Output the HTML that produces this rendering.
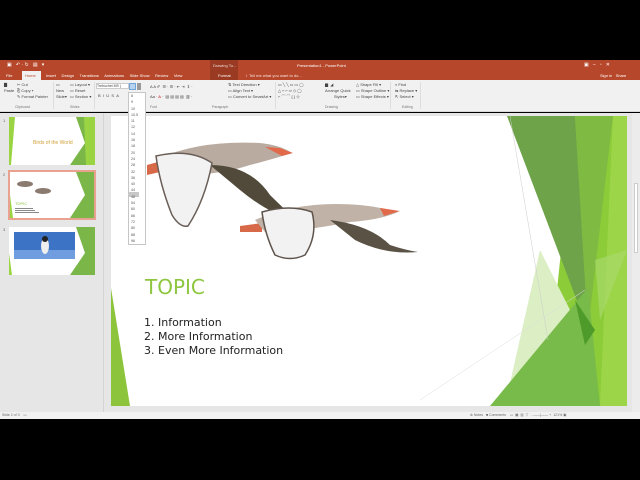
<!DOCTYPE html>
<html><head><meta charset="utf-8"><style>
*{margin:0;padding:0;box-sizing:border-box}
body{width:640px;height:480px;background:#000;position:relative;overflow:hidden;font-family:"Liberation Sans",sans-serif}
.a{position:absolute}
.t{font-size:4px;color:#444;white-space:nowrap}
.w{color:#fff}
</style></head><body>
<div class="a" style="left:0;top:60px;width:640px;height:20px;background:#b7472a"></div>
<div class="a" style="left:210px;top:60px;width:28px;height:20px;background:#9a3a22"></div>
<div class="a t w" style="left:7px;top:62px;font-size:5px">▣ &nbsp; ↶ · ↻ &nbsp; ▤ &nbsp; ▾</div>
<div class="a t w" style="left:213px;top:63px;opacity:.8">Drawing To...</div>
<div class="a t w" style="left:297px;top:63px">Presentation1 - PowerPoint</div>
<div class="a t w" style="left:584px;top:62px;font-size:5px">▣ &nbsp; – &nbsp; ▫ &nbsp; ✕</div>
<div class="a" style="left:22px;top:71px;width:19px;height:9px;background:#f1f1f1"></div>
<div class="a t w" style="left:6px;top:73px">File</div>
<div class="a t" style="left:25px;top:73px;color:#b7472a">Home</div>
<div class="a t w" style="left:46px;top:73px">Insert &nbsp;&nbsp;&nbsp; Design &nbsp;&nbsp;&nbsp; Transitions &nbsp;&nbsp;&nbsp; Animations &nbsp;&nbsp;&nbsp; Slide Show &nbsp;&nbsp;&nbsp; Review &nbsp;&nbsp;&nbsp; View</div>
<div class="a t w" style="left:218px;top:73px">Format</div>
<div class="a t w" style="left:245px;top:73px;opacity:.85">♀ Tell me what you want to do...</div>
<div class="a t w" style="left:600px;top:73px">Sign in &nbsp;&nbsp;Share</div>
<div class="a" style="left:0;top:80px;width:640px;height:32px;background:#f1f1f1;border-bottom:1px solid #dadada"></div>
<div class="a t" style="left:4px;top:82px;line-height:6px">▇<br>Paste</div>
<div class="a t" style="left:17px;top:82px;line-height:6px">✂ Cut<br>⎘ Copy ▾<br>✎ Format Painter</div>
<div class="a t" style="left:56px;top:82px;line-height:6px">▭<br>New<br>Slide▾</div>
<div class="a t" style="left:70px;top:82px;line-height:6px">▭ Layout ▾<br>▭ Reset<br>▭ Section ▾</div>
<div class="a" style="left:96px;top:83px;width:33px;height:6px;background:#fff;border:1px solid #ccc"></div>
<div class="a t" style="left:97px;top:84px;font-size:3.5px">Trebuchet MS (</div>
<div class="a t" style="left:98px;top:93px">B &nbsp;I &nbsp;U &nbsp;S &nbsp;A</div>
<div class="a t" style="left:150px;top:84px">A A ✐ &nbsp;☰ · ☰ · ⇤ ⇥ &nbsp;⇕ ·</div>
<div class="a t" style="left:150px;top:94px">Aa · <span style="color:#c00">A</span> · &nbsp;▤ ▤ ▤ ▤ &nbsp;▥ ·</div>
<div class="a t" style="left:228px;top:82px;line-height:6px">⇅ Text Direction ▾<br>▭ Align Text ▾<br>▭ Convert to SmartArt ▾</div>
<div class="a t" style="left:278px;top:82px;line-height:6px;letter-spacing:1px">▭╲╲▭▭◯<br>△⌐⌐⇨◇◯<br>⌐⌒⌒{}☆</div>
<div class="a t" style="left:325px;top:82px;line-height:6px">▆ &nbsp;◢<br>Arrange Quick<br>&nbsp;&nbsp;&nbsp;&nbsp;&nbsp;&nbsp;&nbsp;&nbsp;Styles▾</div>
<div class="a t" style="left:356px;top:82px;line-height:6px">△ Shape Fill ▾<br>▭ Shape Outline ▾<br>▭ Shape Effects ▾</div>
<div class="a t" style="left:395px;top:82px;line-height:6px">⌕ Find<br>⇆ Replace ▾<br>⇱ Select ▾</div>
<div class="a t" style="left:15px;top:105px;color:#777;font-size:3.5px">Clipboard</div>
<div class="a t" style="left:70px;top:105px;color:#777;font-size:3.5px">Slides</div>
<div class="a t" style="left:150px;top:105px;color:#777;font-size:3.5px">Font</div>
<div class="a t" style="left:212px;top:105px;color:#777;font-size:3.5px">Paragraph</div>
<div class="a t" style="left:325px;top:105px;color:#777;font-size:3.5px">Drawing</div>
<div class="a t" style="left:402px;top:105px;color:#777;font-size:3.5px">Editing</div>
<div class="a" style="left:53px;top:82px;width:1px;height:27px;background:#ddd"></div>
<div class="a" style="left:94px;top:82px;width:1px;height:27px;background:#ddd"></div>
<div class="a" style="left:275px;top:82px;width:1px;height:27px;background:#ddd"></div>
<div class="a" style="left:390px;top:82px;width:1px;height:27px;background:#ddd"></div>
<div class="a" style="left:420px;top:82px;width:1px;height:27px;background:#ddd"></div>
<div class="a" style="left:0;top:113px;width:640px;height:299px;background:#e6e6e6"></div>
<div class="a" style="left:103px;top:113px;width:1px;height:299px;background:#d4d4d4"></div>
<div class="a" style="left:632px;top:113px;width:8px;height:299px;background:#ececec"></div>
<div class="a" style="left:634px;top:183px;width:4px;height:70px;background:#fff;border:1px solid #ccc"></div>
<div class="a" style="left:0;top:412px;width:640px;height:7px;background:#f1f1f1"></div>
<div class="a t" style="left:2px;top:413px;font-size:3.5px;color:#666">Slide 2 of 3 &nbsp;&nbsp; ▭</div>
<div class="a t" style="left:470px;top:413px;font-size:3.5px;color:#666">≐ Notes &nbsp; ■ Comments &nbsp;&nbsp; ▭ &nbsp;▦ &nbsp;▥ &nbsp;▽ &nbsp; - ——|—— + &nbsp;121% ▣</div>
<svg class="a" style="left:0;top:113px" width="104" height="170">
<text x="3" y="9" font-size="4" fill="#666" font-family="Liberation Sans">1</text>
<text x="3" y="63" font-size="4" fill="#666" font-family="Liberation Sans">2</text>
<text x="3" y="118" font-size="4" fill="#666" font-family="Liberation Sans">3</text>
<rect x="9" y="4" width="86" height="48" fill="#fff"/>
<polygon points="76,4 95,4 95,52 70,52 85,30" fill="#7ab648"/>
<polygon points="84,4 95,4 95,52 86,52" fill="#9bd442"/>
<polygon points="9,4 15,4 11,52 9,52" fill="#9bd442"/>
<text x="33" y="31" font-size="5" fill="#d1a23a" font-family="Liberation Sans">Birds of the World</text>
<rect x="8" y="57" width="88" height="50" fill="#e9a190"/>
<rect x="10" y="59" width="84" height="46" fill="#fff"/>
<polygon points="76,59 94,59 94,105 70,105 85,82" fill="#7ab648"/>
<polygon points="10,82 13,105 10,105" fill="#9bd442"/>
<ellipse cx="25" cy="71" rx="8" ry="3" fill="#8a7a70"/>
<ellipse cx="43" cy="78" rx="8" ry="3" fill="#8a7a70"/>
<text x="15" y="92" font-size="4" fill="#8dc63f" font-family="Liberation Sans">TOPIC</text>
<rect x="15" y="95" width="18" height="1" fill="#888"/><rect x="15" y="97" width="20" height="1" fill="#888"/><rect x="15" y="99" width="24" height="1" fill="#888"/>
<rect x="9" y="114" width="86" height="48" fill="#fff"/>
<polygon points="76,114 95,114 95,162 70,162 85,140" fill="#7ab648"/>
<polygon points="9,140 12,162 9,162" fill="#9bd442"/>
<rect x="14" y="119" width="61" height="27" fill="#3d73c4"/>
<rect x="14" y="137" width="61" height="9" fill="#6f9de0"/>
<ellipse cx="45" cy="133" rx="4" ry="8" fill="#eee"/><ellipse cx="45" cy="126" rx="3" ry="3" fill="#222"/>
</svg>
<svg class="a" style="left:111px;top:116px" width="516" height="290" viewBox="111 116 516 290">
<rect x="111" y="116" width="516" height="290" fill="#fff"/>
<polygon points="575,116 627,116 627,406 545,406" fill="#8ccc38"/>
<polygon points="613,116 627,116 627,406 600,406" fill="#9dd548"/>
<polygon points="540,250 575,320 508,392" fill="#dbeec4"/>
<polygon points="507,116 575,116 588,330" fill="#6ea349"/>
<polygon points="575,116 613,116 588,330" fill="#7fba42"/>
<polygon points="490,406 588,288 600,406" fill="#78bb4a"/>
<polygon points="575,300 595,330 585,345" fill="#4e9a2a"/>
<polygon points="595,260 627,250 600,320" fill="#a6d86a" opacity=".7"/>
<line x1="510" y1="116" x2="548" y2="340" stroke="#ccc" stroke-width=".5"/>
<line x1="420" y1="400" x2="585" y2="290" stroke="#ddd" stroke-width=".5"/>
<polygon points="111,288 130,406 111,406" fill="#8cc43c"/>
<g>
<polygon points="147,165 165,160 160,172 147,175" fill="#d76848"/>
<path d="M160,158 Q200,140 260,143 Q280,145 292,153 Q270,160 250,165 Q210,178 175,172 Z" fill="#b9aba0"/>
<path d="M210,165 Q250,165 270,195 Q290,215 300,222 Q270,215 240,190 Z" fill="#514a3a"/>
<path d="M156,156 Q160,185 172,215 Q180,228 188,226 Q205,200 212,163 Q190,148 156,156 Z" fill="#f2f2f2" stroke="#6a5e58" stroke-width="1.5"/>
<path d="M265,147 L280,148 L293,153 L282,156 Z" fill="#e06a4a"/>
<polygon points="240,226 262,223 262,232 240,232" fill="#d76848"/>
<path d="M255,220 Q300,200 360,205 Q380,207 398,212 Q380,220 350,222 Q300,232 265,232 Z" fill="#c0b2a6"/>
<path d="M330,220 Q370,225 390,245 Q405,250 418,252 Q385,255 355,240 Z" fill="#5a5244"/>
<path d="M262,212 Q265,235 275,255 Q290,262 305,255 Q318,235 312,212 Q290,204 262,212 Z" fill="#f2f2f2" stroke="#5e544c" stroke-width="1.5"/>
<path d="M380,208 L400,211 L384,216 Z" fill="#e06a4a"/>
</g>
<text x="145" y="294" font-size="20" fill="#8dc63f" font-family="DejaVu Sans, sans-serif">TOPIC</text>
<text x="144" y="326" font-size="11" fill="#222" font-family="DejaVu Sans, sans-serif">1. Information</text>
<text x="144" y="340" font-size="11" fill="#222" font-family="DejaVu Sans, sans-serif">2. More Information</text>
<text x="144" y="354" font-size="11" fill="#222" font-family="DejaVu Sans, sans-serif">3. Even More Information</text>
</svg>
<div class="a" style="left:129px;top:83px;width:7px;height:7px;background:#b7d3f0;border:1px solid #6fa5db"></div>
<div class="a" style="left:137px;top:83px;width:4px;height:7px;background:#999"></div>
<div class="a" style="left:128px;top:92px;width:18px;height:153px;background:#fff;border:1px solid #c6c6c6"></div>
<div class="a" style="left:129px;top:192px;width:10px;height:5px;background:#c8c8c8"></div>
<div class="a t" style="left:131px;top:93px;font-size:3.6px;line-height:6.3px;color:#555">8<br>9<br>10<br>10.5<br>11<br>12<br>14<br>16<br>18<br>20<br>24<br>28<br>32<br>36<br>40<br>44<br>48<br>54<br>60<br>66<br>72<br>80<br>88<br>96</div>
</body></html>
